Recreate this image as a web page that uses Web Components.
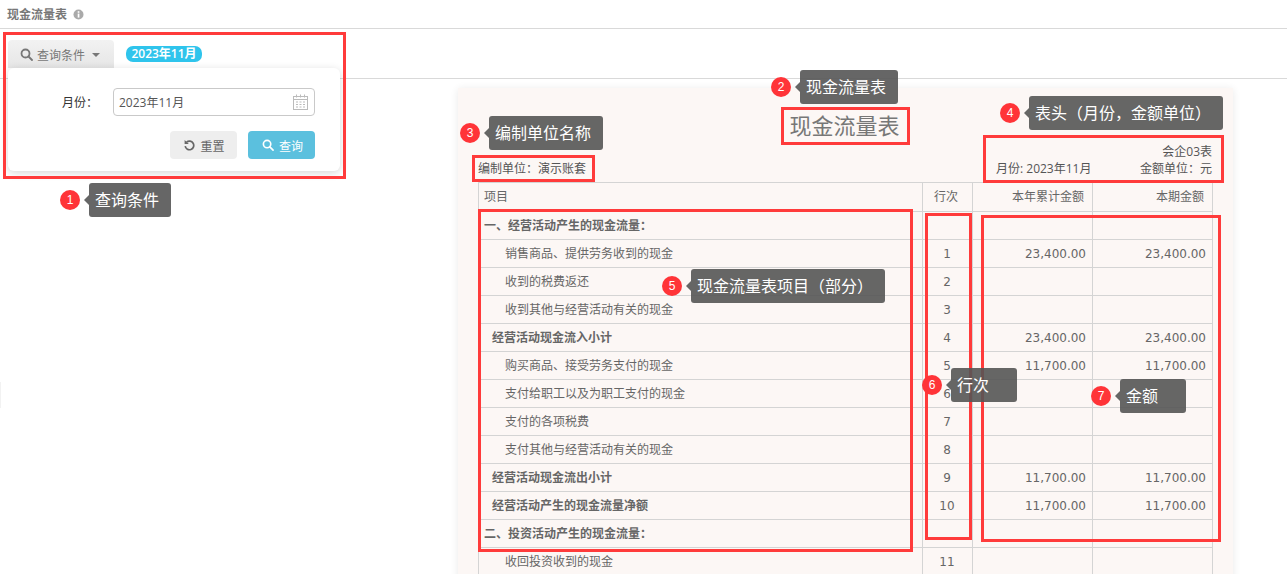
<!DOCTYPE html>
<html lang="zh"><head><meta charset="utf-8"><title>现金流量表</title>
<style>
html,body{margin:0;padding:0;background:#fff;height:574px;overflow:hidden}
body{font:12px/17px "Open Sans","Noto Sans CJK SC",sans-serif;color:#555}
</style></head><body>
<cf-app></cf-app>
<script>
const CJK='"Open Sans","Noto Sans CJK SC",sans-serif';
const searchIcon=(c,s=13)=>`<svg width="${s}" height="${s}" viewBox="0 0 13 13" fill="none" stroke="${c}" stroke-width="1.8"><circle cx="5.5" cy="5.5" r="4"/><path d="M8.5 8.5L12 12" stroke-linecap="round"/></svg>`;
function def(name,css,html){
  customElements.define(name,class extends HTMLElement{
    constructor(){super();this.attachShadow({mode:'open'}).innerHTML=`<style>${css}</style>${typeof html==='function'?'':html}`;}
    connectedCallback(){if(typeof html==='function'&&!this._d){this._d=1;this.shadowRoot.innerHTML+=html(this);}}
  });
}
def('page-header',`:host{display:flex;align-items:center;gap:6px;height:28px;padding-left:7px;border-bottom:1px solid #d9d9d9;box-sizing:content-box}
b{font-size:12px;color:#777;font-weight:700;font-family:"Noto Sans CJK SC",sans-serif;line-height:16px}
svg{display:block}`,
`<b><slot></slot></b><svg width="11" height="11" viewBox="0 0 11 11"><circle cx="5.5" cy="5.5" r="5" fill="#aaa"/><rect x="4.7" y="4.6" width="1.7" height="4" fill="#fff"/><rect x="4.7" y="2.2" width="1.7" height="1.6" fill="#fff"/></svg>`);

def('query-bar',`:host{display:flex;align-items:flex-start;border-bottom:1px solid #d9d9d9;padding:11px 0 0 8px;box-sizing:border-box;height:50px;position:relative}
.btn{display:flex;align-items:center;width:106px;height:28px;box-sizing:border-box;padding-left:12px;gap:4px;background:linear-gradient(#f2f2f2,#e6e6e6);border-radius:4px 4px 0 0;color:#777;font-family:"Noto Sans CJK SC",sans-serif;font-size:12px}
.btn i{width:0;height:0;border:4px solid transparent;border-top:4px solid #777;border-bottom:0;margin-left:3px;margin-top:1px}
.tag{margin:6px 0 0 12px;height:16px;line-height:16px;width:76px;box-sizing:border-box;background:#2fc4ec;border-radius:7px;color:#fff;font-size:12px;font-weight:600;font-family:${CJK};white-space:nowrap;text-align:center}
svg{display:block}`,
`<div class="btn">${searchIcon('#777')}<span>查询条件</span><i></i></div><div class="tag">2023年11月</div><slot></slot>`);

def('query-panel',`:host{position:absolute;left:8px;top:39px;width:332px;height:103px;background:#fff;border-radius:6px;box-shadow:0 2px 8px rgba(0,0,0,.16);display:block;box-sizing:border-box;padding:20px 25px 0 0;z-index:1}
.row{display:flex;align-items:center;justify-content:flex-end;height:28px}
label{color:#333;font-family:"Noto Sans CJK SC",sans-serif;font-size:12px;margin-right:15px;padding-bottom:2px}
.inp{width:202px;height:28px;box-sizing:border-box;border:1px solid #c9c9c9;border-radius:4px;display:flex;align-items:center;justify-content:space-between;padding:0 5px 0 5px;color:#555;font-family:${CJK};font-size:12px}
.acts{display:flex;justify-content:flex-end;gap:11px;margin-top:15px}
.b{width:67px;height:28px;border-radius:4px;display:flex;align-items:center;justify-content:center;gap:5px;font-family:"Noto Sans CJK SC",sans-serif;font-size:12px;box-sizing:border-box;padding-left:2px}
.r{background:#eee;color:#666}.q{background:#5bc0de;color:#fff}
svg{display:block}`,
`<div class="row"><label>月份：</label><div class="inp"><span>2023年11月</span>
<svg width="17" height="16" viewBox="0 0 17 16" fill="none" stroke="#bbb"><rect x="1.5" y="2.5" width="14" height="13"/><path d="M1.5 5.5h14M4.5 0.5v3M8.5 0.5v3M12.5 0.5v3"/><path d="M4 8h2M7.5 8h2M11 8h2M4 10.5h2M7.5 10.5h2M11 10.5h2M4 13h2M7.5 13h2M11 13h2" stroke-width="1.2"/></svg></div></div>
<div class="acts"><div class="b r"><svg width="11" height="12" viewBox="0 0 11 12" fill="none"><path d="M2.6 3.2A4.3 4.3 0 1 1 1.2 7.2" stroke="#666" stroke-width="1.7"/><path d="M0.6 0.9v4.2h4.2z" fill="#666"/></svg><span>重置</span></div>
<div class="b q">${searchIcon('#fff',12)}<span>查询</span></div></div>`);

def('paper-sheet',`:host{display:block;width:775px;height:520px;margin:9px 0 0 458px;background:#fcf7f5;box-shadow:0 1px 8px rgba(0,0,0,.09);box-sizing:border-box;padding:20px 20px 0}
h1{margin:0;text-align:center;font:400 22px/32px "Noto Sans CJK SC",sans-serif;color:#777;width:733px;padding-bottom:2px}
.meta{display:flex;justify-content:space-between;align-items:flex-end;height:40px;padding-bottom:5px;box-sizing:border-box;width:734px;color:#555}
.rt{width:216px;line-height:17px}
.rt div:first-child{text-align:right}
.rt div:last-child{display:flex;justify-content:space-between}`,
`<h1>现金流量表</h1><div class="meta"><span>编制单位：演示账套</span><div class="rt"><div>会企03表</div><div><span>月份: 2023年11月</span><span>金额单位：元</span></div></div></div><slot></slot>`);

const ROWS=[
['b0','一、经营活动产生的现金流量：','','',''],
['n','销售商品、提供劳务收到的现金','1','23,400.00','23,400.00'],
['n','收到的税费返还','2','',''],
['n','收到其他与经营活动有关的现金','3','',''],
['b1','经营活动现金流入小计','4','23,400.00','23,400.00'],
['n','购买商品、接受劳务支付的现金','5','11,700.00','11,700.00'],
['n','支付给职工以及为职工支付的现金','6','',''],
['n','支付的各项税费','7','',''],
['n','支付其他与经营活动有关的现金','8','',''],
['b1','经营活动现金流出小计','9','11,700.00','11,700.00'],
['b1','经营活动产生的现金流量净额','10','11,700.00','11,700.00'],
['b0','二、投资活动产生的现金流量：','','',''],
['n','收回投资收到的现金','11','',''],
];
def('cash-table',`:host{display:block;width:735px;color:#666;border-top:1px solid #d4d4d4}
.r{display:grid;grid-template-columns:444px 50px 120px 121px;height:28px;box-sizing:border-box;border-bottom:1px solid #d4d4d4}
.r.h{height:29px}
.r>div{border-left:1px solid #d4d4d4;display:flex;align-items:center;min-width:0;white-space:nowrap;box-sizing:border-box}
.r>div:last-child{border-right:1px solid #d4d4d4}
.l{padding-left:5px;padding-bottom:2px;font-family:"Noto Sans CJK SC",sans-serif;font-size:12px}
.n .l{padding-left:26px}.b1 .l{padding-left:13px;font-weight:700}.b0 .l{font-weight:700}
.c{justify-content:center;padding-top:2px;padding-right:1px;font-family:"DejaVu Sans",sans-serif}
.a{justify-content:flex-end;padding-right:6px;padding-top:2px;font-family:"DejaVu Sans",sans-serif}
.h .c,.h .a{font-family:"Noto Sans CJK SC",sans-serif;padding-top:0;padding-bottom:4px}.h .l{padding-bottom:4px}.h .a{padding-right:8px}.h .c{padding-right:3px}`,
()=>`<div class="r h"><div class="l">项目</div><div class="c">行次</div><div class="a">本年累计金额</div><div class="a">本期金额</div></div>`+
ROWS.map(r=>`<div class="r ${r[0]}"><div class="l">${r[1]}</div><div class="c">${r[2]}</div><div class="a">${r[3]}</div><div class="a">${r[4]}</div></div>`).join(''));

def('mark-box',`:host{position:absolute;display:block;box-sizing:border-box;border:3px solid #ff3b3b;left:var(--x);top:var(--y);width:var(--w);height:var(--h);z-index:2;pointer-events:none}`,``);

def('call-out',`:host{position:absolute;left:var(--x);top:var(--y);display:flex;align-items:center;height:34px;z-index:3;font:16px/33px "Noto Sans CJK SC",sans-serif}
.n{width:20px;height:20px;border-radius:50%;background:#ff3438;color:#fff;font:12px/20px "Liberation Sans",sans-serif;text-align:center;margin-right:9px;position:relative}
.n::after{content:"";position:absolute;left:24px;top:5px;border:5px solid transparent;border-right:5px solid rgba(85,85,85,.9);border-left:0}
.t{width:var(--w);box-sizing:border-box;height:34px;padding-left:6px;background:rgba(85,85,85,.9);border-radius:3px;color:#fff;white-space:nowrap}`,
(h)=>`<div class="n">${h.getAttribute('n')}</div><div class="t"><slot></slot></div>`);

def('edge-tab',`:host{position:absolute;left:0;top:382px;width:1px;height:26px;background:#f2f2f2;display:block}`,``);

def('cf-app',`:host{display:block;position:relative;width:1287px;height:574px;overflow:hidden}`,
`<page-header>现金流量表</page-header>
<query-bar><query-panel></query-panel></query-bar>
<paper-sheet><cash-table></cash-table></paper-sheet>
<edge-tab></edge-tab>
<mark-box style="--x:3px;--y:32px;--w:343px;--h:147px"></mark-box>
<mark-box style="--x:781px;--y:107px;--w:129px;--h:38px"></mark-box>
<mark-box style="--x:472px;--y:155px;--w:123px;--h:27px"></mark-box>
<mark-box style="--x:983px;--y:135px;--w:241px;--h:48px"></mark-box>
<mark-box style="--x:478px;--y:209px;--w:435px;--h:343px"></mark-box>
<mark-box style="--x:925px;--y:213px;--w:47px;--h:327px"></mark-box>
<mark-box style="--x:981px;--y:215px;--w:240px;--h:327px"></mark-box>
<call-out n="1" style="--x:60px;--y:183px;--w:82px">查询条件</call-out>
<call-out n="2" style="--x:771px;--y:70px;--w:98px">现金流量表</call-out>
<call-out n="3" style="--x:460px;--y:116px;--w:114px">编制单位名称</call-out>
<call-out n="4" style="--x:1000px;--y:96px;--w:194px">表头（月份，金额单位）</call-out>
<call-out n="5" style="--x:662px;--y:269px;--w:194px">现金流量表项目（部分）</call-out>
<call-out n="6" style="--x:922px;--y:368px;--w:66px">行次</call-out>
<call-out n="7" style="--x:1091px;--y:379px;--w:66px">金额</call-out>`);
</script></body></html>
